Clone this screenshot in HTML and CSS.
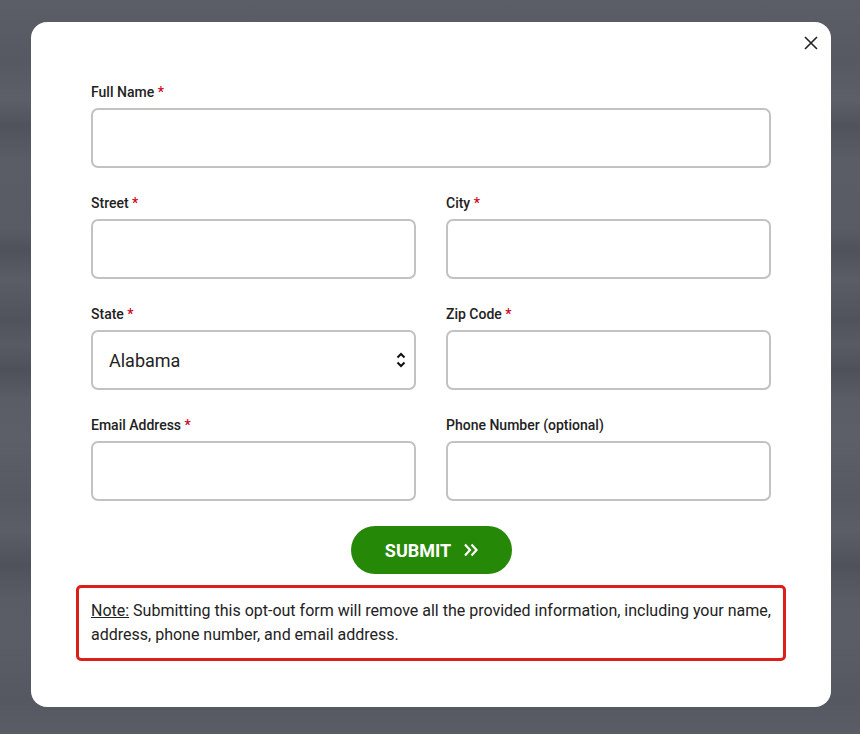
FILE: index.html
```html
<!DOCTYPE html>
<html lang="en">
<head>
<meta charset="utf-8">
<title>Opt-out form</title>
<link rel="stylesheet" href="styles.css">
</head>
<body>
<div class="overlay">
  <div class="modal">
    <button class="close" type="button" aria-label="Close">
      <svg width="14" height="14" viewBox="0 0 14 14"><path d="M1 1 L13 13 M13 1 L1 13" stroke="#222" stroke-width="1.6" fill="none"/></svg>
    </button>
    <form class="form">
      <div class="field full">
        <label class="label">Full Name <span class="req">*</span></label>
        <input class="input" type="text">
      </div>
      <div class="grid">
        <div class="field">
          <label class="label">Street <span class="req">*</span></label>
          <input class="input" type="text">
        </div>
        <div class="field">
          <label class="label">City <span class="req">*</span></label>
          <input class="input" type="text">
        </div>
        <div class="field">
          <label class="label">State <span class="req">*</span></label>
          <div class="select-wrap">
            <select class="input select"><option>Alabama</option></select>
            <svg class="select-icon" width="10" height="16" viewBox="0 0 10 16"><path d="M1.5 5.5 L5 2 L8.5 5.5 M1.5 10.5 L5 14 L8.5 10.5" stroke="#111" stroke-width="2" fill="none"/></svg>
          </div>
        </div>
        <div class="field">
          <label class="label">Zip Code <span class="req">*</span></label>
          <input class="input" type="text">
        </div>
        <div class="field">
          <label class="label">Email Address <span class="req">*</span></label>
          <input class="input" type="text">
        </div>
        <div class="field">
          <label class="label">Phone Number (optional)</label>
          <input class="input" type="text">
        </div>
      </div>
      <div class="actions">
        <button class="submit" type="button">SUBMIT
          <svg width="16" height="14" viewBox="0 0 16 14"><path d="M2 1.5 L7 7 L2 12.5 M8.5 1.5 L13.5 7 L8.5 12.5" stroke="#fff" stroke-width="2.2" fill="none"/></svg>
        </button>
      </div>
      <p class="note"><u>Note:</u> Submitting this opt-out form will remove all the provided information, including your name, address, phone number, and email address.</p>
    </form>
  </div>
</div>
</body>
</html>
```

FILE: styles.css
```css
html, body {
  margin: 0;
  padding: 0;
}
body {
  font-family: Roboto, "Liberation Sans", Arial, sans-serif;
  color: #222;
}
.overlay {
  width: 860px;
  height: 734px;
  box-sizing: border-box;
  padding: 22px 0 0 2px;
  background:
    linear-gradient(180deg,
      #5b5d67 0px, #565862 60px, #5c5e68 100px, #50525c 125px, #5a5c66 160px,
      #585a64 230px, #4f515b 250px, #5a5c66 280px, #50525c 320px, #585a64 345px,
      #4e505a 370px, #5a5c66 400px, #5c5e68 440px, #565862 500px, #5b5d67 530px,
      #50525b 565px, #595b65 600px, #5a5c66 640px, #555761 700px, #5a5c66 734px);
  display: flex;
  justify-content: center;
  align-items: flex-start;
}
.modal {
  position: relative;
  width: 800px;
  box-sizing: border-box;
  background: #fff;
  border-radius: 16px;
  padding: 60px 60px 46px;
}
.close {
  position: absolute;
  top: 14px;
  right: 13px;
  width: 14px;
  height: 14px;
  padding: 0;
  border: none;
  background: none;
  display: flex;
  cursor: pointer;
}
.form {
  display: flex;
  flex-direction: column;
}
.grid {
  display: grid;
  grid-template-columns: 1fr 1fr;
  column-gap: 30px;
  row-gap: 25px;
  margin-top: 25px;
}
.field {
  display: flex;
  flex-direction: column;
  min-width: 0;
}
.label {
  font-size: 14px;
  font-weight: 500;
  line-height: 20px;
  color: #222;
  margin-bottom: 6px;
}
.req {
  color: #d0021b;
}
.input {
  box-sizing: border-box;
  width: 100%;
  height: 60px;
  border: 2px solid #c2c2c2;
  border-radius: 7px;
  background: #fff;
  font-family: inherit;
  font-size: 18px;
  color: #222;
  padding: 0 16px;
  margin: 0;
  outline: none;
}
.select-wrap {
  position: relative;
}
.select {
  appearance: none;
  -webkit-appearance: none;
  padding-left: 16px;
}
.select-icon {
  position: absolute;
  right: 10px;
  top: 22px;
  pointer-events: none;
}
.actions {
  display: flex;
  justify-content: center;
  margin-top: 25px;
}
.submit {
  width: 161px;
  height: 48px;
  border: none;
  border-radius: 24px;
  background: #258807;
  color: #fff;
  font-family: inherit;
  font-size: 18px;
  font-weight: 700;
  display: flex;
  align-items: center;
  justify-content: center;
  gap: 12px;
  padding: 0 0 0 2px;
  cursor: pointer;
}
.note {
  margin: 11px -15px 0;
  border: 3px solid #dc1f1a;
  border-radius: 5px;
  padding: 11px 12px 11px;
  font-size: 16px;
  line-height: 24px;
  color: #222;
}
```
